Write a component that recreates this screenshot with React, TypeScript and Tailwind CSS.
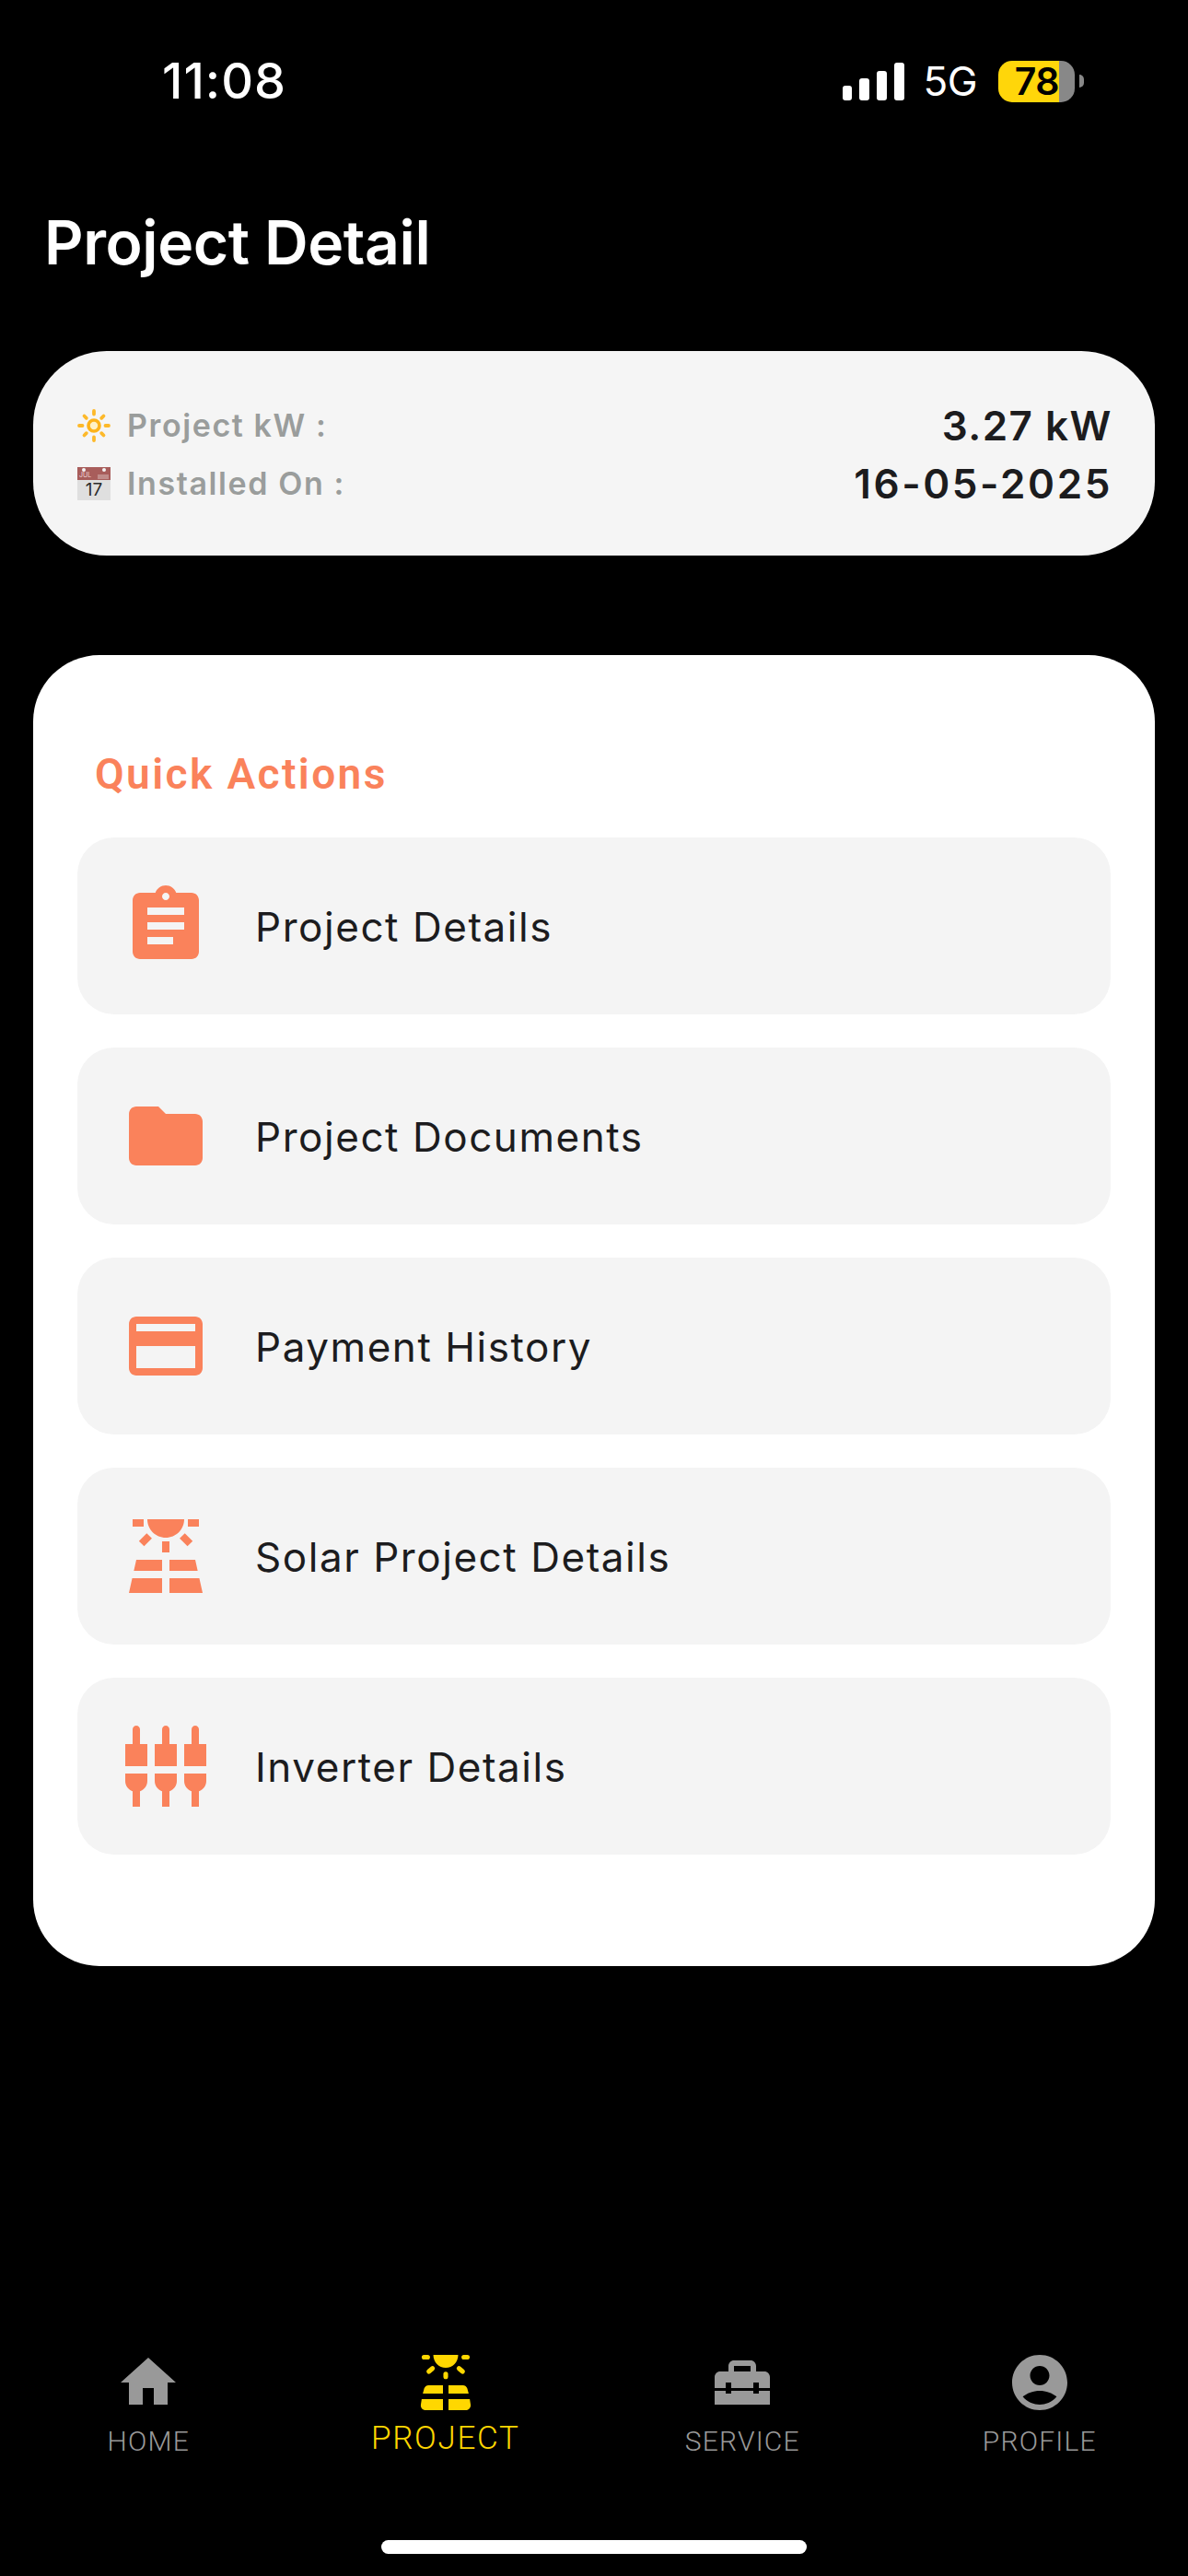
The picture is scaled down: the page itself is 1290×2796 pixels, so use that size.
import {
  MdAssignment,
  MdCreditCard,
  MdFolder,
  MdHome,
  MdHomeRepairService,
  MdSettingsInputComponent,
  MdSolarPower,
} from "react-icons/md";
import type { ComponentType, ReactNode } from "react";

const actions: { label: string; Icon: ComponentType<{ className?: string }> }[] = [
  { label: "Project Details", Icon: MdAssignment },
  { label: "Project Documents", Icon: MdFolder },
  { label: "Payment History", Icon: MdCreditCard },
  { label: "Solar Project Details", Icon: MdSolarPower },
  { label: "Inverter Details", Icon: MdSettingsInputComponent },
];

function SunEmoji() {
  return (
    <svg viewBox="0 0 36 36" className="w-[36px] h-[36px] shrink-0">
      <circle cx="18" cy="18" r="6" fill="#fff1c4" stroke="#fdb31a" strokeWidth="3.600" />
      <g stroke="#fdb92a" strokeWidth="3.800" strokeLinecap="round">
        <path d="M18 2v3.500M18 30.500V34M2 18h3.500M30.500 18H34M7.500 7.500l2.300 2.300M26.200 26.200l2.300 2.300M7.500 28.500l2.300-2.300M26.200 9.800l2.300-2.300" />
      </g>
    </svg>
  );
}

function CalendarEmoji() {
  return (
    <div className="relative flex flex-col w-[36px] h-[36px] shrink-0 font-normal tracking-normal">
      <div className="flex items-end justify-between h-[14px] bg-[#a85d5b] px-[2px] pb-[1px]">
        <span className="text-[7px] leading-[8px] text-[#f0d8d8]">JUL</span>
        <div className="w-[12px] h-[5px] bg-[#c08c8a]" />
      </div>
      <div className="flex-1 bg-[#dfdfdf] text-center text-[19px] leading-[22px] text-[#2c2c2c]">17</div>
      <div className="absolute left-[5px] top-[1px] w-[4px] h-[4px] rounded-full bg-[#f4f4f4]" />
      <div className="absolute right-[5px] top-[1px] w-[4px] h-[4px] rounded-full bg-[#f4f4f4]" />
    </div>
  );
}

function SolarRounded({ className }: { className?: string }) {
  return (
    <svg viewBox="0 0 24 24" fill="currentColor" className={className}>
      <rect x="3.300" y="2" width="3" height="1.700" rx="0.850" />
      <rect x="17.700" y="2" width="3" height="1.700" rx="0.850" />
      <path d="M7.500 2h9c0 2.600-2 4.700-4.500 4.700S7.500 4.600 7.500 2z" />
      <g stroke="currentColor" strokeWidth="1.700" strokeLinecap="round">
        <line x1="5.900" y1="8" x2="7.200" y2="6.900" />
        <line x1="18.100" y1="8" x2="16.800" y2="6.900" />
        <line x1="12" y1="8.900" x2="12" y2="9.900" />
      </g>
      <path d="M5.800 13H11v3H3.700l.5-1.800C4.400 13.500 5 13 5.800 13z" />
      <path d="M13 13h5.200c.8 0 1.400.5 1.600 1.200l.5 1.800H13z" />
      <path d="M3.300 18H11v4H4.800c-1.200 0-2-1-1.800-2.100z" />
      <path d="M13 18h7.700l.3 1.900c.2 1.100-.6 2.100-1.800 2.100H13z" />
    </svg>
  );
}

function ProfileIcon({ className }: { className?: string }) {
  return (
    <svg viewBox="0 0 24 24" fill="currentColor" className={className}>
      <path d="M12 2C6.48 2 2 6.48 2 12s4.480 10 10 10 10-4.480 10-10S17.520 2 12 2zm0 4c1.930 0 3.500 1.570 3.500 3.500S13.930 13 12 13s-3.500-1.570-3.500-3.500S10.070 6 12 6zm0 14c-2.030 0-4.430-.82-6.140-2.880C7.550 15.800 9.680 15 12 15s4.450.8 6.140 2.120C16.430 19.180 14.030 20 12 20z" />
    </svg>
  );
}

function StatusBar() {
  return (
    <div className="flex items-center justify-between h-[64px] pl-[176px] pr-[113px] mt-[56px] text-white">
      <span className="text-[54px] leading-none font-medium tracking-[1px]">11:08</span>
      <div className="flex items-center">
        <div className="flex items-end gap-[8px] h-[41px]">
          <div className="w-[10px] h-[16px] bg-white rounded-[3px]" />
          <div className="w-[11px] h-[24px] bg-white rounded-[3px]" />
          <div className="w-[11px] h-[32px] bg-white rounded-[3px]" />
          <div className="w-[11px] h-[41px] bg-white rounded-[3px]" />
        </div>
        <span className="ml-[20px] text-[44px] leading-none font-normal tracking-[-0.5px]">5G</span>
        <div className="ml-[23px] flex items-center">
          <div className="flex items-center justify-end w-[66px] h-[45px] rounded-l-[15px] bg-[#ffd60a] text-black text-[41px] leading-none font-semibold tracking-[-0.5px]">
            78
          </div>
          <div className="w-[17px] h-[45px] rounded-r-[15px] bg-[#888888]" />
          <div className="ml-[5px] w-[5px] h-[14px] rounded-r-full bg-[#888888]" />
        </div>
      </div>
    </div>
  );
}

function NavItem({ label, children }: { label: string; children: ReactNode }) {
  return (
    <div className="flex flex-col items-center">
      {children}
      <span className="mt-[10px] text-[30px] leading-[35px] font-light tracking-[1.2px]">{label}</span>
    </div>
  );
}

function BottomNav() {
  return (
    <div className="mt-auto">
      <nav className="grid grid-cols-4 text-[#999999] font-['Roboto',sans-serif]">
        <NavItem label="HOME">
          <MdHome className="w-[72px] h-[72px]" />
        </NavItem>
        <div className="flex flex-col items-center text-[#ffd700]">
          <SolarRounded className="w-[72px] h-[72px]" />
          <span className="mt-[4px] text-[35px] leading-[41px] font-light tracking-[1.7px]">PROJECT</span>
        </div>
        <NavItem label="SERVICE">
          <MdHomeRepairService className="w-[72px] h-[72px]" />
        </NavItem>
        <NavItem label="PROFILE">
          <ProfileIcon className="w-[72px] h-[72px]" />
        </NavItem>
      </nav>
      <div className="mt-[90px] mb-[24px] mx-auto w-[462px] h-[15px] rounded-full bg-white" />
    </div>
  );
}

export default function App() {
  return (
    <div className="flex flex-col w-[1290px] h-[2796px] bg-black font-['Inter',sans-serif]">
      <StatusBar />

      <h1 className="mt-[103px] ml-[48px] text-[66px] leading-[80px] font-semibold tracking-[-0.4px] text-white">
        Project Detail
      </h1>

      {/* Summary */}
      <div className="mt-[78px] mx-[36px] h-[222px] rounded-[80px] bg-[#f5f5f5] px-[48px] pt-[2px] flex flex-col justify-center gap-[21px]">
        <div className="flex items-center justify-between h-[42px]">
          <div className="flex items-center gap-[18px] text-[34px] font-semibold text-[#9a9d9c] tracking-[1.6px]">
            <SunEmoji />
            <span>Project kW :</span>
          </div>
          <span className="mr-[-2px] text-[44px] font-semibold text-[#1c1c1e] tracking-[1.5px]">3.27 kW</span>
        </div>
        <div className="flex items-center justify-between h-[42px]">
          <div className="flex items-center gap-[18px] text-[34px] font-semibold text-[#9a9d9c] tracking-[1.6px]">
            <CalendarEmoji />
            <span>Installed On :</span>
          </div>
          <span className="mr-[-2px] text-[44px] font-semibold text-[#1c1c1e] tracking-[2.6px]">16-05-2025</span>
        </div>
      </div>

      {/* Quick actions */}
      <div className="mt-[108px] mx-[36px] h-[1423px] rounded-[72px] bg-white px-[48px] pt-[102px]">
        <h2 className="ml-[19px] text-[46px] leading-[54px] font-semibold text-[#fa825b] tracking-[2.4px] font-['Roboto',sans-serif]">
          Quick Actions
        </h2>
        <div className="mt-[42px] flex flex-col gap-[36px]">
          {actions.map(({ label, Icon }) => (
            <div key={label} className="flex items-center h-[192px] rounded-[40px] bg-[#f4f4f4] pl-[48px]">
              <Icon className="w-[96px] h-[96px] text-[#fa825b]" />
              <span className="ml-[49px] pt-[2px] text-[44px] font-normal text-[#1c1c1e] tracking-[1.55px]">{label}</span>
            </div>
          ))}
        </div>
      </div>

      <BottomNav />
    </div>
  );
}
